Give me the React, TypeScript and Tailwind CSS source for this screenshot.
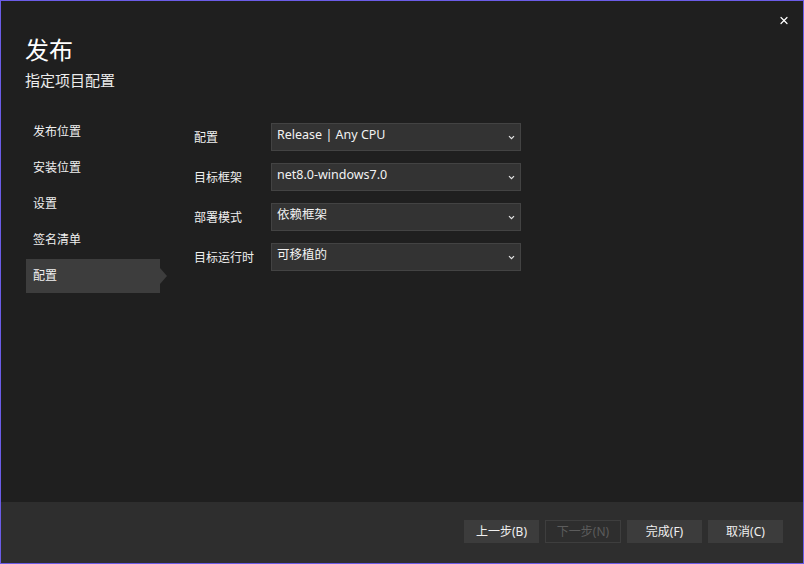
import { X } from 'lucide-react';

const FONT = { fontFamily: '"Noto Sans", "Noto Sans CJK SC", sans-serif' };

const NAV = ['发布位置', '安装位置', '设置', '签名清单', '配置'];

const FIELDS = [
  { label: '配置', value: 'Release | Any CPU' },
  { label: '目标框架', value: 'net8.0-windows7.0' },
  { label: '部署模式', value: '依赖框架' },
  { label: '目标运行时', value: '可移植的' },
];

function Chevron() {
  return (
    <svg width="7" height="5" viewBox="0 0 7 5" className="shrink-0">
      <path d="M1 1.2 L3.5 3.7 L6 1.2" fill="none" stroke="#e6e6e6" strokeWidth="1.2" />
    </svg>
  );
}

export default function App() {
  return (
    <div
      className="w-[804px] h-[564px] flex flex-col border border-[#6b5ce7] bg-[#1f1f1f] text-[#f0f0f0] overflow-hidden"
      style={FONT}
    >
      <div className="flex-1 flex flex-col relative">
        <button className="absolute top-[13px] right-[13px] w-[12px] h-[12px] flex items-center justify-center text-white">
          <X size={13} strokeWidth={2.4} />
        </button>

        <div className="pl-6 pt-[34px]">
          <h1 className="text-[24px] leading-[30px] text-white">发布</h1>
          <p className="text-[15px] leading-[20px] mt-[5px] text-[#ececec]">指定项目配置</p>
        </div>

        <div className="flex pl-[25px] mt-[25px]">
          <nav className="w-[134px] flex flex-col">
            {NAV.map((item, i) => {
              const active = i === NAV.length - 1;
              return (
                <div
                  key={item}
                  className={`relative h-[34px] mb-[2px] pl-[7px] flex items-center text-[12px] ${active ? 'bg-[#3d3d3d]' : ''}`}
                >
                  {item}
                  {active && (
                    <span className="absolute left-full top-1/2 -translate-y-1/2 w-0 h-0 border-y-[8px] border-y-transparent border-l-[7px] border-l-[#3d3d3d]" />
                  )}
                </div>
              );
            })}
          </nav>

          <div className="ml-[34px] pt-[8px] flex flex-col gap-[12px]">
            {FIELDS.map(f => (
              <div key={f.label} className="flex items-center">
                <span className="w-[77px] text-[12px] pt-[1px]">{f.label}</span>
                <div className="w-[250px] h-[28px] border border-[#434343] bg-[#333333] pl-[5px] pr-[5px] flex items-center justify-between">
                  <span className="text-[12.5px] -mt-[3px] text-[#f2f2f2]">{f.value}</span>
                  <Chevron />
                </div>
              </div>
            ))}
          </div>
        </div>
      </div>

      <div className="h-[61px] bg-[#2e2e2e] flex items-start justify-end pt-[18px] pr-[20px]">
        <button className="w-[75px] h-[23px] bg-[#3c3c3c] text-[12px] text-[#f0f0f0]">上一步(B)</button>
        <button className="w-[76px] h-[23px] ml-[6px] border border-[#3e3e3e] text-[12px] text-[#5c5c5c]">下一步(N)</button>
        <button className="w-[75px] h-[23px] ml-[6px] bg-[#3c3c3c] text-[12px] text-[#f0f0f0]">完成(F)</button>
        <button className="w-[75px] h-[23px] ml-[6px] bg-[#3c3c3c] text-[12px] text-[#f0f0f0]">取消(C)</button>
      </div>
    </div>
  );
}
